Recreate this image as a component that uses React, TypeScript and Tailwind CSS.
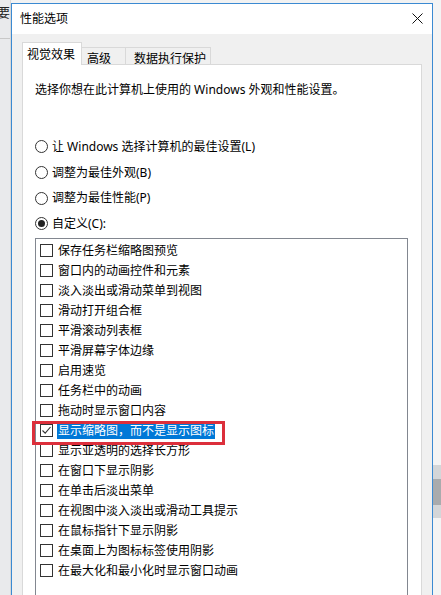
import React from 'react';

const items = [
  '保存任务栏缩略图预览',
  '窗口内的动画控件和元素',
  '淡入淡出或滑动菜单到视图',
  '滑动打开组合框',
  '平滑滚动列表框',
  '平滑屏幕字体边缘',
  '启用速览',
  '任务栏中的动画',
  '拖动时显示窗口内容',
  '显示缩略图，而不是显示图标',
  '显示亚透明的选择长方形',
  '在窗口下显示阴影',
  '在单击后淡出菜单',
  '在视图中淡入淡出或滑动工具提示',
  '在鼠标指针下显示阴影',
  '在桌面上为图标标签使用阴影',
  '在最大化和最小化时显示窗口动画',
];

const radios = [
  { label: '让 Windows 选择计算机的最佳设置(L)', checked: false },
  { label: '调整为最佳外观(B)', checked: false },
  { label: '调整为最佳性能(P)', checked: false },
  { label: '自定义(C):', checked: true },
];

function Radio({ checked }: { checked: boolean }) {
  return (
    <span className="w-[13px] h-[13px] rounded-full border border-[#333] bg-white flex items-center justify-center shrink-0">
      {checked && <span className="w-[7px] h-[7px] rounded-full bg-[#222]" />}
    </span>
  );
}

function Check({ checked }: { checked: boolean }) {
  return (
    <span className="w-[13px] h-[13px] border border-[#333] bg-white shrink-0 flex items-center justify-center">
      {checked && (
        <svg width="11" height="11" viewBox="0 0 11 11">
          <path d="M1.5 5.5 L4.2 8.2 L9.5 2" fill="none" stroke="#333" strokeWidth="1.1" />
        </svg>
      )}
    </span>
  );
}

export default function App() {
  return (
    <div className="w-[441px] h-[595px] overflow-hidden relative flex bg-[#f2f2f2] text-black text-[12px] font-['Noto_Sans','Noto_Sans_CJK_SC',sans-serif]">
      {/* left desktop strip */}
      <div className="w-[11px] shrink-0 bg-[#e9eaec] relative overflow-hidden border-r border-[#d8d8d8]">
        <span className="block -ml-[3px] mt-[4px] text-[13px] leading-[16px] text-[#222] font-['Noto_Sans_CJK_SC',sans-serif]">要</span>
        <div className="mt-[18px] h-px w-full bg-[#c8c8c8]" />
      </div>

      {/* window */}
      <div className="w-[422px] shrink-0 mt-[3px] border border-b-0 border-[#3b8ad2] bg-[#f0f0f0] flex flex-col">
        {/* title bar */}
        <div className="h-[30px] bg-white flex items-center justify-between pl-[8px] pr-[9px] pb-[2px]">
          <span className="leading-[16px] font-['Noto_Sans_CJK_SC',sans-serif]">性能选项</span>
          <svg width="11" height="11" viewBox="0 0 11 11">
            <path d="M0.5 0.5 L10.5 10.5 M10.5 0.5 L0.5 10.5" stroke="#111" strokeWidth="1" />
          </svg>
        </div>

        {/* client */}
        <div className="flex-1 px-[10px] pt-[8px] flex flex-col">
          {/* tabs */}
          <div className="flex items-end relative z-10 -mb-px">
            <div className="w-[60px] h-[23px] bg-white border border-b-0 border-[#d9d9d9] pl-[4px] pt-[3px] leading-[16px] font-['Noto_Sans_CJK_SC',sans-serif]">
              视觉效果
            </div>
            <div className="w-[44px] h-[18px] border-t border-r border-b border-[#d9d9d9] bg-[#f0f0f0] pl-[5px] pt-[2px] leading-[16px] font-['Noto_Sans_CJK_SC',sans-serif]">
              高级
            </div>
            <div className="w-[85px] h-[18px] border-t border-r border-b border-[#d9d9d9] bg-[#f0f0f0] pl-[8px] pt-[2px] leading-[16px] font-['Noto_Sans_CJK_SC',sans-serif]">
              数据执行保护
            </div>
          </div>

          {/* panel */}
          <div className="flex-1 bg-white border border-b-0 border-[#d9d9d9] pl-[12px] pt-[17px] flex flex-col">
            <div className="leading-[16px]">选择你想在此计算机上使用的 Windows 外观和性能设置。</div>

            <div className="mt-[36px] flex flex-col">
              {radios.map((r) => (
                <div key={r.label} className="h-[25.7px] flex items-center gap-[4px]">
                  <Radio checked={r.checked} />
                  <span className="leading-[16px]">{r.label}</span>
                </div>
              ))}
            </div>

            {/* list box */}
            <div className="mt-[1px] w-[373px] flex-1 border border-b-0 border-[#828790] bg-white pt-[2px] relative">
              {items.map((t, i) => (
                <div key={t} className="h-[20px] flex items-center pl-[4px] gap-[4px]">
                  <Check checked={i === 9} />
                  {i === 9 ? (
                    <span className="bg-[#0078d7] text-white leading-[17px] px-[1px]">{t}</span>
                  ) : (
                    <span className="leading-[16px] pl-[1px]">{t}</span>
                  )}
                </div>
              ))}
              {/* red annotation box */}
              <div className="absolute left-[-4px] top-[182px] w-[193px] h-[24px] border-[3px] border-[#dc2f3b]" />
            </div>
          </div>
        </div>
      </div>

      {/* right desktop strip */}
      <div className="flex-1 bg-[#f4f4f4] flex flex-col">
        <div className="mt-[465px] h-[53px] flex flex-col">
          <div className="h-[14px] bg-[#d4d6d8]" />
          <div className="h-[26px] bg-[#a9abad]" />
          <div className="h-[13px] bg-[#d4d6d8]" />
        </div>
      </div>
    </div>
  );
}
